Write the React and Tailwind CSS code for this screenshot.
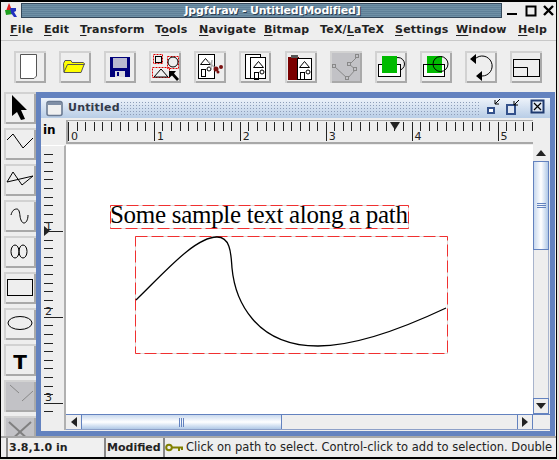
import React from "react";

const menus = [
  { before: "", key: "F", after: "ile", w: "w-[34px]" },
  { before: "", key: "E", after: "dit", w: "w-[36px]" },
  { before: "", key: "T", after: "ransform", w: "w-[75px]" },
  { before: "T", key: "o", after: "ols", w: "w-[44px]" },
  { before: "", key: "N", after: "avigate", w: "w-[65px]" },
  { before: "", key: "B", after: "itmap", w: "w-[56px]" },
  { before: "TeX/", key: "L", after: "aTeX", w: "w-[75px]" },
  { before: "", key: "S", after: "ettings", w: "w-[61px]" },
  { before: "", key: "W", after: "indow", w: "w-[62px]" },
  { before: "", key: "H", after: "elp", w: "w-[30px]" },
];

const bevel = "shadow-[inset_2px_2px_0_#d2d2d2,inset_-2px_-2px_0_#a9a9a9]";

function ToolButton({ children, off }) {
  return (
    <div className={`w-8 h-8 shrink-0 ${off ? "bg-[#c2c2c6]" : "bg-[#eeeeee]"} ${bevel}`}>
      <svg width="32" height="32" viewBox="0 0 32 32" className="block">
        {children}
      </svg>
    </div>
  );
}

function House({ x, y }) {
  return (
    <g transform={`translate(${x} ${y})`} fill="none" stroke="#000" strokeWidth="1" shapeRendering="crispEdges">
      <path d="M1.5 8.5 L6.5 2.5 L11.5 8.5 Z" shapeRendering="auto" />
      <rect x="2.5" y="13.5" width="4" height="7" />
      <circle cx="10" cy="13" r="2" shapeRendering="auto" />
    </g>
  );
}

function TopRuler() {
  const ticks = Array.from({ length: 55 }, (_, i) => i);
  return (
    <svg width="465" height="21" className="block">
      {ticks.map((i) => {
        const x = Math.round(i * 8.59) + 0.5;
        return <line key={i} x1={x} x2={x} y1="1" y2={i % 10 === 0 ? 20 : 10} stroke="#222" />;
      })}
      {[0, 1, 2, 3, 4, 5].map((n) => (
        <text key={n} x={3 + n * 85.9} y="19" fontSize="11" fill="#222" fontFamily="DejaVu Sans, sans-serif">
          {n}
        </text>
      ))}
      <path d="M322 1 H332 L327 9 Z" fill="#222" />
    </svg>
  );
}

function LeftRuler() {
  const ticks = Array.from({ length: 32 }, (_, i) => i);
  return (
    <svg width="23" height="284" className="block">
      {ticks.map((i) => {
        const y = Math.round(i * 8.59 - 0.9) + 0.5;
        const major = i % 10 === 0 && i > 0;
        return <line key={i} x1="3" x2={major ? 22 : 12} y1={y} y2={y} stroke="#222" />;
      })}
      {[1, 2, 3].map((n) => (
        <text key={n} x="4" y={n * 85.9 - 2.4} fontSize="11" fill="#222" fontFamily="DejaVu Sans, sans-serif">
          {n}
        </text>
      ))}
      <path d="M3 80 L9 85 L3 90 Z" fill="#222" />
    </svg>
  );
}

function Drawing() {
  return (
    <svg width="467" height="269" viewBox="66 145 467 269" className="block">
      <rect x="110.5" y="205.5" width="298" height="23" fill="none" stroke="#dddddd" />
      <rect x="110.5" y="205.5" width="298" height="23" fill="none" stroke="#f03030" strokeDasharray="12 4" />
      <text x="110" y="223" fontSize="25" fill="#000" fontFamily="Liberation Serif, serif" textLength="298">
        Some sample text along a path
      </text>
      <rect x="135.5" y="236.5" width="312" height="117" fill="none" stroke="#dddddd" />
      <rect x="135.5" y="236.5" width="312" height="117" fill="none" stroke="#f03030" strokeDasharray="12 4" />
      <path
        d="M136 300 C165 272 195 237 217 237 C231 237 231 255 232 268 C235 300 255 346 318 346 C360 346 410 325 446 308"
        fill="none"
        stroke="#000"
        strokeWidth="1.3"
      />
    </svg>
  );
}

export default function App() {
  return (
    <div className="w-[559px] h-[460px] overflow-hidden bg-[#e8e4dc]">
      <div
        className="w-[557px] h-[459px] overflow-hidden bg-[#eeeeee] flex flex-col border-x border-black text-black"
        style={{ fontFamily: "'DejaVu Sans', sans-serif" }}
      >
        <div className="h-[2px] bg-black shrink-0" />
        {/* window title */}
        <div className="h-[18px] shrink-0 flex bg-[#eeeeee]">
          <div className="w-[20px] h-[18px] shrink-0">
            <svg width="20" height="18" className="block">
              <path d="M5 9 L8 1 L11 8 Z" fill="#e02020" />
              <path d="M4 8 H10 L12 12 L5 13 Z" fill="#20a020" />
              <path d="M9 6 H15 V9 L13 10 L16 15 H13 L10 11 Z" fill="#2030c0" />
            </svg>
          </div>
          <div className="w-[481px] h-[15px] shrink-0 mt-px pl-[22px] border border-[#33475a] bg-[repeating-linear-gradient(180deg,#6f90a6_0px,#6f90a6_1px,#5f8098_1px,#5f8098_2px)] flex items-center justify-center">
            <span className="text-white font-bold text-[11px] leading-none tracking-[-0.2px] [text-shadow:1px_1px_0_#2c3e50]">
              Jpgfdraw - Untitled[Modified]
            </span>
          </div>
          <svg width="54" height="18" className="block shrink-0">
            <rect x="5" y="11" width="10" height="2" fill="#000" />
            <rect x="24.5" y="4.5" width="9" height="9" fill="none" stroke="#000" strokeWidth="2" />
            <path d="M42 4 L51 13 M51 4 L42 13" stroke="#000" strokeWidth="2.4" />
          </svg>
        </div>
        {/* menu bar */}
        <div className="h-[21px] shrink-0 flex items-center pl-[9px] border-b border-b-[#c8c8c8] text-[11px] tracking-[0.2px] font-bold text-[#222222] whitespace-nowrap">
          {menus.map((m) => (
            <div key={m.key + m.after} className={m.w}>
              {m.before}
              <span className="underline underline-offset-2">{m.key}</span>
              {m.after}
            </div>
          ))}
        </div>
        {/* tool bar */}
        <div className="h-[51px] shrink-0 flex items-start pt-[10px] pl-[13px] gap-[13px]">
          <ToolButton>
            <path d="M6.5 3.5 H22.5 V25 L20 27.5 H6.5 Z" fill="#fff" stroke="#555" />
          </ToolButton>
          <ToolButton>
            <path d="M4.5 12.5 L6 9.5 H12 L13 11.5 H24 L25.5 12.5 L22 21.5 H5 Z" fill="#ffff00" stroke="#555" />
            <path d="M5 21 L8.5 13.5 H25.5" fill="none" stroke="#555" />
          </ToolButton>
          <ToolButton>
            <rect x="6" y="6" width="20" height="20" fill="#00007a" />
            <rect x="9" y="7" width="14" height="10" fill="#b8b8d0" />
            <rect x="11" y="20" width="10" height="6" fill="#d8d8e0" />
            <rect x="13" y="21" width="2" height="4" fill="#00007a" />
          </ToolButton>
          <ToolButton>
            <g fill="none" stroke="#e00000" strokeWidth="1" strokeDasharray="2 1">
              <rect x="4.5" y="3.5" width="9" height="9" />
              <rect x="18.5" y="5.5" width="11" height="12" />
              <rect x="3.5" y="16.5" width="17" height="10" />
            </g>
            <rect x="6.5" y="5.5" width="6" height="6" fill="none" stroke="#000" />
            <circle cx="24" cy="11" r="5" fill="none" stroke="#000" />
            <path d="M5 26 L12 18 L19 26 Z" fill="none" stroke="#000" />
            <path d="M20 20 H27 L25 22.5 L30 28 L28 30 L23 24.5 L20 27 Z" fill="#000" />
          </ToolButton>
          <ToolButton>
            <rect x="4.5" y="3.5" width="16" height="24" fill="#fff" stroke="#000" />
            <House x={5} y={5} />
            <path d="M14 10 L22 18 M18 9 L17 17" stroke="#b0b0b0" strokeWidth="1.5" fill="none" />
            <circle cx="22" cy="18" r="2.5" fill="#7a1010" />
            <circle cx="27" cy="16" r="2" fill="#7a1010" />
            <circle cx="24" cy="21" r="1.5" fill="#7a1010" />
          </ToolButton>
          <ToolButton>
            <rect x="6.5" y="3.5" width="15" height="24" fill="#fff" stroke="#000" />
            <rect x="11.5" y="6.5" width="15" height="21" fill="#fff" stroke="#000" />
            <House x={13} y={8} />
          </ToolButton>
          <div className="ml-px">
            <ToolButton>
              <rect x="3" y="6" width="11" height="23" fill="#7a0000" />
              <rect x="6" y="4" width="7" height="3" fill="#555" />
              <rect x="12.5" y="7.5" width="14" height="21" fill="#fff" stroke="#000" />
              <House x={13} y={8} />
            </ToolButton>
          </div>
          <ToolButton off>
            <path d="M4.5 15.5 L17.5 27.5 L25.5 18.5 L19.5 13.5 L27.5 5.5" fill="none" stroke="#888" />
            <g fill="#c2c2c6" stroke="#888">
              <rect x="2.5" y="13.5" width="3" height="3" />
              <rect x="15.5" y="25.5" width="3" height="3" />
              <rect x="23.5" y="16.5" width="3" height="3" />
              <rect x="17.5" y="11.5" width="3" height="3" />
              <rect x="25.5" y="3.5" width="3" height="3" />
            </g>
          </ToolButton>
          <ToolButton>
            <circle cx="23" cy="13" r="6.5" fill="none" stroke="#000" />
            <rect x="3.5" y="13.5" width="22" height="12" fill="#fff" stroke="#000" />
            <rect x="7" y="5" width="15" height="17" fill="#00bb00" />
          </ToolButton>
          <ToolButton>
            <rect x="3.5" y="13.5" width="21" height="12" fill="#fff" stroke="#000" />
            <rect x="7" y="5" width="15" height="17" fill="#00bb00" />
            <rect x="3.5" y="13.5" width="21" height="12" fill="none" stroke="#000" />
            <circle cx="20.5" cy="13" r="7.5" fill="none" stroke="#000" />
          </ToolButton>
          <ToolButton>
            <path d="M10 8 A10 10 0 1 1 17 25" fill="none" stroke="#000" />
            <path d="M11 3 V13 L5 8 Z M17 20 V30 L11 25 Z" fill="#000" />
          </ToolButton>
          <ToolButton>
            <rect x="3.5" y="8.5" width="26" height="17" fill="none" stroke="#000" />
            <path d="M3.5 16.5 H17.5 V25" fill="none" stroke="#000" />
          </ToolButton>
        </div>
        {/* main area */}
        <div className="h-[344px] shrink-0 flex pl-[3px] overflow-hidden">
          <div className="w-8 shrink-0 flex flex-col gap-1">
            <ToolButton>
              <path d="M8 3 L23 18 L17 18 L21 27 L17 28 L13 20 L8 24 Z" fill="#000" />
            </ToolButton>
            <ToolButton>
              <path d="M3 12 L9 6 L19 20 L29 10" fill="none" stroke="#000" />
            </ToolButton>
            <ToolButton>
              <path d="M3 18 L9 8 L18 21 L29 12 Z" fill="none" stroke="#000" />
            </ToolButton>
            <ToolButton>
              <path d="M7 15 C8 11 10 9 12.7 9 C15 9 15.5 12 16 16 C16.5 20 18 23 20 23 C22 23 24 20 24 15" fill="none" stroke="#000" />
            </ToolButton>
            <ToolButton>
              <ellipse cx="11" cy="15.5" rx="4" ry="6.5" fill="none" stroke="#000" />
              <ellipse cx="19" cy="15.5" rx="4" ry="6.5" fill="none" stroke="#000" />
            </ToolButton>
            <ToolButton>
              <rect x="3.5" y="7.5" width="25" height="16" fill="none" stroke="#000" />
            </ToolButton>
            <ToolButton>
              <ellipse cx="16" cy="15" rx="12" ry="6.5" fill="none" stroke="#000" />
            </ToolButton>
            <ToolButton>
              <text x="16" y="25" textAnchor="middle" fontSize="20" fontWeight="bold" fontFamily="DejaVu Sans, sans-serif">
                T
              </text>
            </ToolButton>
            <ToolButton off>
              <path d="M6 5 L15 13 M18 21 L29 11" stroke="#888" fill="none" />
            </ToolButton>
            <ToolButton off>
              <path d="M5 6 L26 25 M27 6 L6 25" stroke="#808080" strokeWidth="2" fill="none" />
            </ToolButton>
          </div>
          {/* internal frame */}
          <div className="w-[519px] h-[344px] shrink-0 border-[5px] border-t-[6px] border-[#6382bf] flex flex-col">
            <div className="h-[20px] shrink-0 flex items-center bg-gradient-to-b from-[#eef3fa] to-[#b8cde6] pl-[5px]">
              <svg width="17" height="17" className="block shrink-0">
                <rect x="1" y="1.5" width="15" height="14" rx="2" fill="#f0f0f0" stroke="#6a7a92" strokeWidth="1.6" />
                <rect x="2" y="2" width="13" height="3" fill="#7f8ea5" />
              </svg>
              <span className="ml-[5px] w-[52px] shrink-0 text-[11px] tracking-[0.2px] font-bold text-[#333a4a]">Untitled</span>
              <div className="h-[14px] w-[360px] shrink-0 bg-[radial-gradient(#8d9db8_0.8px,transparent_0.8px)] bg-[length:3px_3px]" />
              <svg width="66" height="20" className="block shrink-0">
                <rect x="8" y="10" width="6" height="5" fill="#fff" stroke="#33518c" strokeWidth="2" />
                <path d="M20 1 L15 6 M15 2 V6 H19" fill="none" stroke="#000" />
                <rect x="27" y="7" width="8" height="9" fill="#dfe7f3" stroke="#33518c" strokeWidth="2" />
                <path d="M39 2 L34 7 M34 3 V7 H38" fill="none" stroke="#000" />
                <rect x="51.5" y="2.5" width="12" height="12" fill="#dfe7f3" stroke="#1f3a70" strokeWidth="2" />
                <path d="M54 5 L61 12 M61 5 L54 12" stroke="#000" strokeWidth="1.2" />
              </svg>
            </div>
            <div className="flex-1 flex min-h-0 pb-px">
              {/* left column: corner and vertical ruler */}
              <div className="w-[25px] shrink-0 flex flex-col">
                <div className="h-[27px] shrink-0 pl-[2px] pt-[5px] text-[12px] font-bold leading-[14px]">in</div>
                <div className="flex-1 bg-[#eeeeee] border-t border-t-white border-r-2 border-r-[#b0b0b0] overflow-hidden">
                  <LeftRuler />
                </div>
              </div>
              <div className="flex-1 flex flex-col min-w-0">
                <div className="flex flex-1 min-h-0">
                  <div className="w-[467px] shrink-0 flex flex-col">
                    <div className="h-[24px] mt-[2px] mb-px shrink-0 border-t border-t-[#a8a8a8] border-l-2 border-l-[#a8a8a8] border-b-2 border-b-[#a8a8a8] overflow-hidden">
                      <TopRuler />
                    </div>
                    <div className="flex-1 bg-white">
                      <Drawing />
                    </div>
                  </div>
                  {/* vertical scroll bar */}
                  <div className="w-[16px] shrink-0 flex flex-col">
                    <div className="h-[27px] shrink-0" />
                    <div className="h-[16px] shrink-0 bg-[#eeeeee] flex items-center justify-center">
                      <svg width="10" height="6"><path d="M0 6 L5 0 L10 6 Z" fill="#222" /></svg>
                    </div>
                    <div className="h-[89px] shrink-0 bg-gradient-to-r from-[#c9d9ee] via-[#ffffff] to-[#b0c8e6] border border-[#6382bf] flex items-center justify-center">
                      <svg width="9" height="6"><path d="M0 0.5 H9 M0 2.5 H9 M0 4.5 H9" stroke="#6382bf" /></svg>
                    </div>
                    <div className="flex-1 bg-[#eeeeee] border-x border-[#a8b4cc]" />
                    <div className="h-[16px] shrink-0 bg-[#eeeeee] border border-[#6382bf] flex items-center justify-center">
                      <svg width="10" height="6"><path d="M0 0 L5 6 L10 0 Z" fill="#222" /></svg>
                    </div>
                  </div>
                </div>
                {/* horizontal scroll bar */}
                <div className="h-[16px] shrink-0 flex border-t border-t-[#6382bf] border-b border-b-[#8da0c8]">
                  <div className="w-[16px] shrink-0 border-r border-r-[#6382bf] flex items-center justify-center">
                    <svg width="6" height="10"><path d="M6 0 L0 5 L6 10 Z" fill="#222" /></svg>
                  </div>
                  <div className="w-[200px] shrink-0 bg-gradient-to-b from-[#c9d9ee] via-[#ffffff] to-[#b0c8e6] border-r border-r-[#6382bf] flex items-center justify-center">
                    <svg width="8" height="9"><path d="M1.5 0 V9 M3.5 0 V9 M5.5 0 V9" stroke="#6382bf" /></svg>
                  </div>
                  <div className="flex-1" />
                  <div className="w-[16px] shrink-0 border-x border-x-[#6382bf] flex items-center justify-center">
                    <svg width="6" height="10"><path d="M0 0 L6 5 L0 10 Z" fill="#222" /></svg>
                  </div>
                  <div className="w-[17px] shrink-0" />
                </div>
              </div>
            </div>
          </div>
        </div>
        {/* status bar */}
        <div className="h-[21px] shrink-0 flex items-stretch gap-[2px] pl-[5px] border-t-2 border-t-[#a8a8a8] text-[11px] leading-none whitespace-nowrap overflow-hidden">
          <div className="w-[96px] shrink-0 flex items-center pl-px font-bold text-[#222222] border-l-2 border-l-[#888888] bg-[#f0f0f0]">
            3.8,1.0 in
          </div>
          <div className="w-[57px] shrink-0 flex items-center pl-px font-bold text-[#222222] border-l-2 border-l-[#888888]">
            Modified
          </div>
          <div className="w-[21px] shrink-0 flex items-center border-l-2 border-l-[#888888]">
            <svg width="19" height="9" className="block">
              <circle cx="4" cy="4.5" r="2.8" fill="none" stroke="#808000" strokeWidth="2" />
              <path d="M7 4.5 H18 M14 4.5 V8 M17 4.5 V7" stroke="#808000" strokeWidth="2" fill="none" />
            </svg>
          </div>
          <div className="flex-1 flex items-center text-[#222222] text-[11.5px] min-w-0 overflow-hidden">
            Click on path to select. Control-click to add to selection. Double
          </div>
        </div>
        <div className="h-[2px] bg-black shrink-0" />
      </div>
    </div>
  );
}
